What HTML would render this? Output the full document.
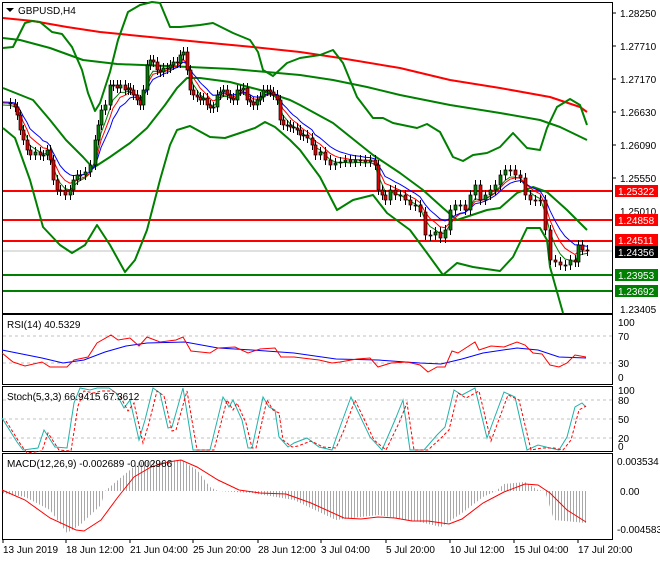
<!DOCTYPE html>
<html><head><meta charset="utf-8"><style>
html,body{margin:0;padding:0;background:#fff;}
body{width:660px;height:560px;overflow:hidden;font-family:"Liberation Sans",sans-serif;}
svg text{font-family:"Liberation Sans",sans-serif;font-size:10px;}
</style></head><body>
<svg id="s" width="660" height="560" viewBox="0 0 660 560" xmlns="http://www.w3.org/2000/svg">
<defs>
<pattern id="hp" width="3" height="10" patternUnits="userSpaceOnUse"><rect x="0" y="0" width="1" height="10" fill="#a8a8a8"/></pattern>
</defs>
<rect width="660" height="560" fill="#fff"/>
<rect x="2.5" y="2.5" width="610" height="311" fill="none" stroke="#000"/>
<line x1="3" y1="191" x2="612" y2="191" stroke="#f00" stroke-width="2"/>
<line x1="3" y1="220" x2="612" y2="220" stroke="#f00" stroke-width="2"/>
<line x1="3" y1="241" x2="612" y2="241" stroke="#f00" stroke-width="2"/>
<line x1="3" y1="251" x2="612" y2="251" stroke="#c0c0c0" stroke-width="1"/>
<line x1="3" y1="275" x2="612" y2="275" stroke="#008000" stroke-width="2"/>
<line x1="3" y1="291" x2="612" y2="291" stroke="#008000" stroke-width="2"/>
<g fill="none" stroke-width="2" stroke-linejoin="round">
<polyline stroke="#f00" points="3,18 33,21 67,27 100,32 150,37 200,42 253,47 300,52 340,58 400,68 450,80 500,88 550,97 580,107 587,112"/>
<polyline stroke="#008000" points="3,38 20,40 50,48 83,60 117,64 167,66 233,69 300,75 333,80 367,87 400,95 450,105 500,113 540,120 560,127 587,140"/>
<polyline stroke="#008000" points="3,48 13,47 25,23 32,21 40,22 52,32 62,34 72,47 82,70 88,93 95,111 100,103 110,72 118,40 128,12 140,5 152,2 160,3 170,27 180,27 200,25 213,23 233,33 250,40 258,52 263,70 273,76 287,63 300,58 320,55 333,50 343,63 357,97 373,118 383,118 393,123 417,128 427,124 440,132 453,157 463,161 473,155 487,153 500,147 513,133 527,148 540,150 547,128 557,107 570,99 580,105 587,125"/>
<polyline stroke="#008000" points="3,88 33,100 50,120 66,140 83,157 93,168 110,157 130,143 147,128 165,105 177,88 187,78 200,78 230,82 260,90 290,100 300,105 333,123 373,155 400,173 423,190 443,208 457,220 487,210 500,208 517,193 533,187 547,192 567,210 587,230"/>
<polyline stroke="#008000" points="3,128 15,138 30,180 43,227 60,245 72,253 85,245 97,225 110,245 125,272 135,260 147,230 160,180 170,145 177,130 190,126 210,137 225,138 240,133 255,128 265,122 275,127 290,140 300,150 320,177 337,210 353,200 373,195 387,213 410,230 427,253 443,275 457,263 473,267 500,271 513,257 527,228 540,228 547,240 550,267 563,313"/>
</g>
<g id="cand"></g>
<path d="M6,8 L14,8 L10,12 Z" fill="#000"/>
<text x="18" y="14" fill="#000">GBPUSD,H4</text>
<g fill="#000">
<line x1="612" y1="13" x2="616" y2="13" stroke="#000"/><text x="620" y="17">1.28250</text>
<line x1="612" y1="46" x2="616" y2="46" stroke="#000"/><text x="620" y="50">1.27710</text>
<line x1="612" y1="79" x2="616" y2="79" stroke="#000"/><text x="620" y="83">1.27170</text>
<line x1="612" y1="112" x2="616" y2="112" stroke="#000"/><text x="620" y="116">1.26630</text>
<line x1="612" y1="145" x2="616" y2="145" stroke="#000"/><text x="620" y="149">1.26090</text>
<line x1="612" y1="178" x2="616" y2="178" stroke="#000"/><text x="620" y="182">1.25550</text>
<text x="620" y="215">1.25010</text>
<text x="620" y="313">1.23405</text>
</g>
<rect x="615" y="185" width="43" height="12" fill="#f00"/><text x="618" y="195" fill="#fff">1.25322</text>
<rect x="615" y="214" width="43" height="12" fill="#f00"/><text x="618" y="224" fill="#fff">1.24858</text>
<rect x="615" y="234" width="43" height="12" fill="#f00"/><text x="618" y="244" fill="#fff">1.24511</text>
<rect x="615" y="246" width="43" height="12" fill="#000"/><text x="618" y="256" fill="#fff">1.24356</text>
<rect x="615" y="269" width="43" height="12" fill="#008000"/><text x="618" y="279" fill="#fff">1.23953</text>
<rect x="615" y="285" width="43" height="12" fill="#008000"/><text x="618" y="295" fill="#fff">1.23692</text>

<rect x="2.5" y="314.5" width="610" height="70" fill="none" stroke="#000"/>
<line x1="3" y1="336" x2="612" y2="336" stroke="#c0c0c0" stroke-dasharray="3,3"/>
<line x1="3" y1="363" x2="612" y2="363" stroke="#c0c0c0" stroke-dasharray="3,3"/>
<polyline fill="none" stroke="#00f" points="2,350 42,358 63,363 84,360 105,352 126,346 147,343 185,342 218,348 252,350 294,353 336,359 378,360 420,363 441,364 462,359 483,353 517,348 538,350 559,357 586,358"/>
<polyline fill="none" stroke="#f00" points="2,353 13,362 25,366 42,362 50,367 67,367 74,360 88,357 97,343 111,335 118,340 130,338 139,346 147,337 160,342 176,340 183,337 191,351 210,353 218,348 235,347 248,353 260,349 275,348 281,357 294,357 319,360 332,363 340,362 357,359 370,358 378,367 391,363 407,362 420,365 428,372 437,367 445,367 452,351 458,353 475,342 479,350 491,346 504,347 517,342 525,345 533,353 542,354 550,365 559,367 567,363 575,355 586,357"/>
<text x="7" y="328">RSI(14) 40.5329</text>
<text x="618" y="326">100</text><text x="618" y="340">70</text><text x="618" y="367">30</text><text x="618" y="381">0</text>

<rect x="2.5" y="386.5" width="610" height="65" fill="none" stroke="#000"/>
<line x1="3" y1="400" x2="612" y2="400" stroke="#c0c0c0" stroke-dasharray="3,3"/>
<line x1="3" y1="419" x2="612" y2="419" stroke="#c0c0c0" stroke-dasharray="3,3"/>
<line x1="3" y1="438" x2="612" y2="438" stroke="#c0c0c0" stroke-dasharray="3,3"/>
<polyline fill="none" stroke="#20b2aa" points="2,418 17,442 23,450 38,448 44,430 55,447 67,448 74,403 80,388 90,390 97,388 109,388 116,393 124,408 130,400 139,440 145,420 153,388 160,393 168,428 172,427 183,388 193,450 210,450 223,397 229,407 233,400 242,420 248,448 252,448 263,397 269,407 275,410 279,437 288,447 294,443 307,438 319,447 332,450 340,427 351,397 370,437 382,450 395,420 403,400 410,450 424,450 437,435 445,427 454,390 462,395 475,388 487,438 504,392 515,397 527,450 538,445 550,448 559,450 567,437 575,407 582,403 586,407"/>
<polyline fill="none" stroke="#f00" stroke-dasharray="3,2" transform="translate(4,3)" points="2,418 17,442 23,450 38,448 44,430 55,447 67,448 74,403 80,388 90,390 97,388 109,388 116,393 124,408 130,400 139,440 145,420 153,388 160,393 168,428 172,427 183,388 193,447 210,447 223,397 229,407 233,400 242,420 248,445 252,445 263,397 269,407 275,410 279,437 288,444 294,443 307,438 319,444 332,445 340,427 351,397 370,437 382,447 395,420 403,400 410,447 424,447 437,435 445,427 454,390 462,395 475,388 487,438 504,392 515,397 527,447 538,445 550,445 559,447 567,437 575,407 582,403"/>
<text x="7" y="400">Stoch(5,3,3) 66.9415 67.3612</text>
<text x="618" y="394">100</text><text x="618" y="404">80</text><text x="618" y="423">50</text><text x="618" y="442">20</text><text x="618" y="450">0</text>

<rect x="2.5" y="453.5" width="610" height="86" fill="none" stroke="#000"/>
<polygon fill="url(#hp)" points="2,491 2,493 25,497 50,510 67,533 80,525 101,505 105,491 118,480 130,470 139,462 181,460 197,470 210,487 218,491 252,493 294,500 336,520 378,515 420,522 441,527 462,513 483,497 496,491 504,484 525,482 538,490 545,491 554,520 586,523 586,491"/>
<polyline fill="none" stroke="#f00" points="2,490 25,500 50,518 76,530 84,531 101,520 118,497 134,477 151,467 168,462 181,460 197,467 218,480 239,490 260,493 286,494 311,503 344,518 361,519 378,517 395,518 412,521 428,521 449,524 462,519 483,503 504,492 525,484 538,485 550,493 567,510 586,522"/>
<text x="7" y="467">MACD(12,26,9) -0.002689 -0.002966</text>
<text x="617" y="465">0.003534</text><text x="620" y="495">0.00</text><text x="617" y="533">-0.004583</text>

<g stroke="#000"><line x1="3" y1="539" x2="3" y2="543"/><line x1="66" y1="539" x2="66" y2="543"/><line x1="130" y1="539" x2="130" y2="543"/><line x1="193" y1="539" x2="193" y2="543"/><line x1="258" y1="539" x2="258" y2="543"/><line x1="321" y1="539" x2="321" y2="543"/><line x1="386" y1="539" x2="386" y2="543"/><line x1="450" y1="539" x2="450" y2="543"/><line x1="514" y1="539" x2="514" y2="543"/><line x1="578" y1="539" x2="578" y2="543"/></g>
<text x="3" y="553">13 Jun 2019</text>
<text x="66" y="553">18 Jun 12:00</text>
<text x="130" y="553">21 Jun 04:00</text>
<text x="193" y="553">25 Jun 20:00</text>
<text x="258" y="553">28 Jun 12:00</text>
<text x="321" y="553">3 Jul 04:00</text>
<text x="386" y="553">5 Jul 20:00</text>
<text x="450" y="553">10 Jul 12:00</text>
<text x="514" y="553">15 Jul 04:00</text>
<text x="578" y="553">17 Jul 20:00</text>
</svg>
<script>
(function(){
var d=[3,103,10,104,15,107,17,115,20,130,23,140,27,150,30,155,35,152,40,155,43,155,47,150,50,160,53,180,57,190,60,190,65,195,70,190,73,180,77,175,80,175,85,172,90,165,95,140,98,125,101,110,105,105,110,85,113,85,117,88,120,85,125,90,128,88,130,90,133,95,137,100,140,105,143,90,147,65,150,60,153,62,157,70,160,72,163,68,167,68,170,65,173,62,177,63,180,55,183,52,187,70,190,90,193,95,197,97,200,100,203,98,207,105,210,108,213,107,217,95,220,92,223,90,227,95,230,98,233,100,237,90,240,90,243,88,247,100,250,102,253,105,257,100,260,97,263,90,267,90,270,92,273,95,277,100,280,120,283,125,287,125,290,127,293,128,297,130,300,135,303,135,307,138,312,145,315,155,320,152,325,160,330,165,335,163,340,162,345,160,350,162,355,160,360,160,365,162,370,160,375,165,378,190,382,195,385,200,390,190,395,195,400,195,405,200,410,205,415,205,420,212,425,235,430,235,435,232,440,238,445,230,450,210,455,205,460,205,465,210,470,195,475,185,480,200,485,195,490,190,495,185,500,175,505,170,510,170,515,175,520,178,525,195,530,200,535,200,540,200,545,230,550,260,555,262,560,265,565,265,570,260,575,262,578,245,582,250,587,250];
var ns="http://www.w3.org/2000/svg",g=document.getElementById("cand");
function el(t,a,p){var e=document.createElementNS(ns,t);for(var k in a)e.setAttribute(k,a[k]);(p||g).appendChild(e);return e;}
var xs=[],cs=[];for(var i=0;i<d.length;i+=2){xs.push(d[i]);cs.push(d[i+1]);}
function ema(n,off){var a=2/(n+1),v=cs[0],pts=[];for(var i=0;i<cs.length;i++){v=v+a*(cs[i]-v);pts.push(xs[i]+","+(v+off).toFixed(1));}return pts.join(" ");}
var mg=document.createElementNS(ns,"g");g.parentNode.insertBefore(mg,g);
el("polyline",{points:ema(4,2),fill:"none",stroke:"#008000","stroke-width":1},mg);
el("polyline",{points:ema(6,0),fill:"none",stroke:"#f00","stroke-width":1},mg);
el("polyline",{points:ema(9,-1),fill:"none",stroke:"#00f","stroke-width":1},mg);
for(var i=1;i<cs.length;i++){var o=cs[i-1],c=cs[i],x=xs[i];var top=Math.min(o,c),bot=Math.max(o,c);if(bot-top<1)bot=top+1;
el("line",{x1:x+.5,y1:top-5,x2:x+.5,y2:bot+5,stroke:"#000"});
el("rect",{x:x-1,y:top,width:3,height:bot-top,fill:c<o?"#008000":"#e00000",stroke:"#000","stroke-width":0.7});}
})();
</script>
</body></html>
